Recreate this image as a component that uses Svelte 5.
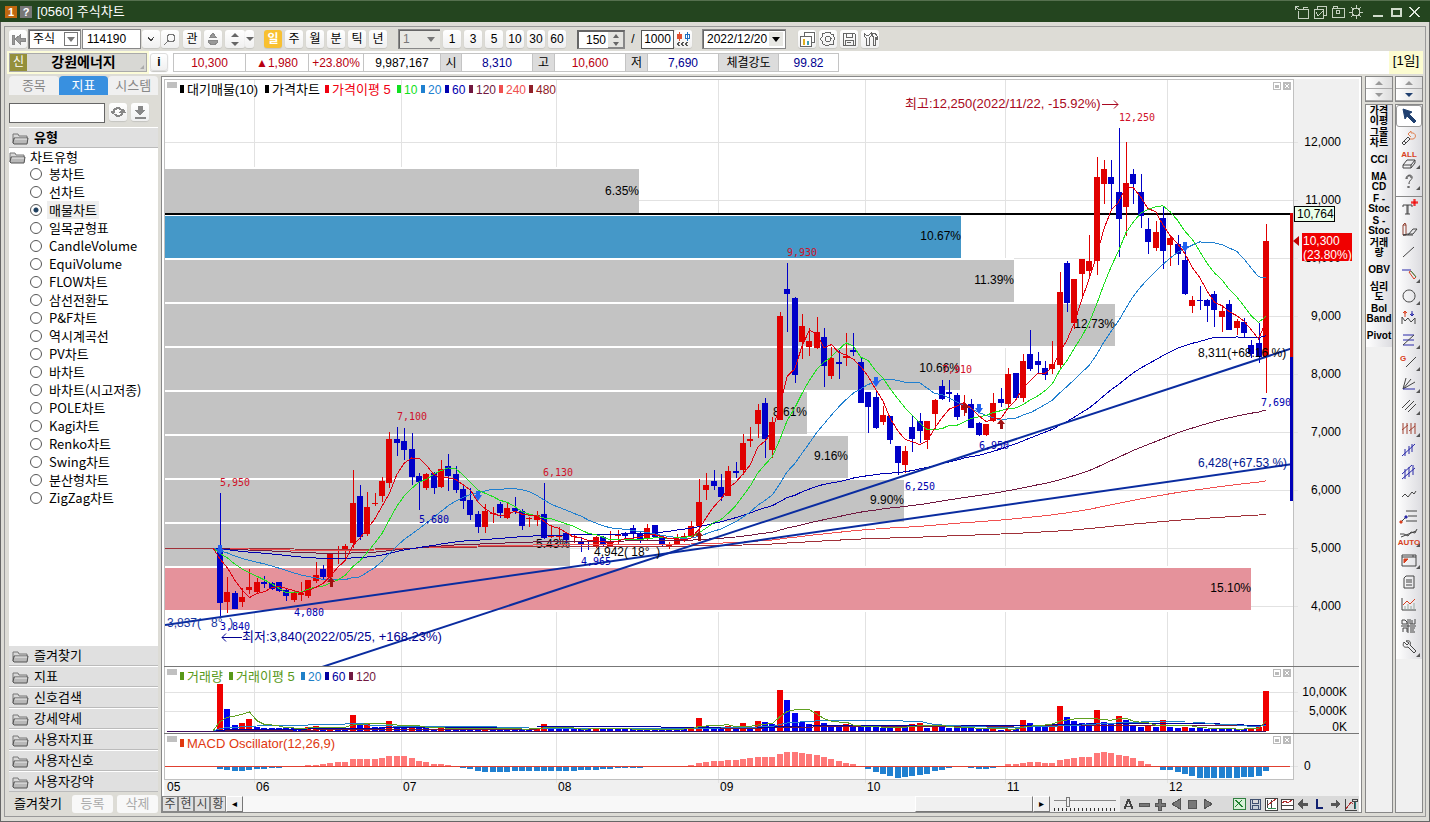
<script>
  let market = "주식";
  let code = "114190";
  let minute = "1";
  let visibleCount = "150";
  let totalCount = "1000";
  let date = "2022/12/20";
  let period = "일";
  let sideTab = "지표";
  let search = "";
  let chartType = "매물차트";
  let zoom = 20;

  const periods = ["일", "주", "월", "분", "틱", "년"];
  const minutes = ["1", "3", "5", "10", "30", "60"];
  const sideTabs = ["종목", "지표", "시스템"];
  const chartTypes = [
    "봉차트", "선차트", "매물차트", "일목균형표", "CandleVolume", "EquiVolume", "FLOW차트",
    "삼선전환도", "P&F차트", "역시계곡선", "PV차트", "바차트", "바차트(시고저종)", "POLE차트",
    "Kagi차트", "Renko차트", "Swing차트", "분산형차트", "ZigZag차트",
  ];
  const groups = ["즐겨찾기", "지표", "신호검색", "강세약세", "사용자지표", "사용자신호", "사용자강약"];
  const shortcuts = [
    ["가격", "이평"], ["그물", "차트"], ["CCI"], ["MA", "CD"], ["F -", "Stoc"], ["S -", "Stoc"],
    ["거래", "량"], ["OBV"], ["심리", "도"], ["Bol", "Band"], ["Pivot"],
  ];
  const quotes = [
    { text: "10,300", kind: "up", w: 72 },
    { text: "▲1,980", kind: "up", w: 63 },
    { text: "+23.80%", kind: "up", w: 55 },
    { text: "9,987,167", kind: "", w: 77 },
    { text: "시", kind: "head", w: 21 },
    { text: "8,310", kind: "down", w: 71 },
    { text: "고", kind: "head", w: 22 },
    { text: "10,600", kind: "up", w: 71 },
    { text: "저", kind: "head", w: 22 },
    { text: "7,690", kind: "down", w: 71 },
    { text: "체결강도", kind: "head", w: 60 },
    { text: "99.82", kind: "down", w: 60 },
  ];

  // r/b = up/down day, then high, body top, body bottom, low
  const raw = `b493,548,603,616 r577,592,602,613 b591,593,609,609 r588,597,602,607 r569,587,590,594 r578,582,592,593
b576,582,584,588 b582,583,589,590 b582,582,591,592 b589,590,596,601 r592,593,600,602 r582,593,595,601
r580,580,596,598 r562,575,581,583 b565,569,577,580 r553,554,577,582 r546,550,551,564 r544,546,551,561
r470,503,543,548 b485,496,537,540 r492,507,534,536 r493,503,504,506 r477,481,496,502 r432,439,483,488
b427,439,443,456 b428,441,450,460 b433,449,477,485 b473,476,482,510 r473,474,488,490 b472,473,488,494
r460,469,487,488 b454,466,476,491 b466,474,490,493 b486,489,501,509 b488,500,515,520 b511,514,527,533
r504,511,527,533 r507,513,514,523 b502,504,513,518 r503,508,518,519 b497,508,511,514 b509,511,526,530
r517,518,519,527 r511,515,520,526 b483,514,538,539 r525,535,537,538 r527,535,537,540 b532,533,540,543
r535,536,537,543 b537,542,544,552 b541,546,547,550 r536,537,547,548 b536,537,545,546 r531,541,546,547
r530,535,536,545 b532,534,536,538 b525,528,534,538 b532,533,539,543 r524,528,539,540 b525,525,537,538
b536,538,545,547 r542,544,547,549 r534,539,544,545 r533,536,540,542 r521,526,537,538 r479,502,526,540
r473,485,490,500 b470,481,486,490 b474,487,497,501 r466,471,496,496 b462,471,473,478 r434,443,470,475
r427,439,441,447 r404,410,424,438 b398,403,439,458 r417,422,450,458 r312,316,420,420 b263,289,294,332
b297,298,375,383 r314,326,342,359 r328,341,347,356 r317,332,348,349 b328,337,366,387 r347,358,376,379
b350,362,364,379 r333,356,358,366 b333,350,352,356 b358,362,403,403 b392,392,407,433 b390,397,428,429
r406,415,422,425 b416,416,440,444 b446,446,463,475 r446,451,465,473 b416,427,439,452 b413,421,431,443
r421,421,440,449 r399,400,414,429 b380,386,399,400 b380,392,394,402 b393,395,417,420 r395,404,410,416
b399,404,428,428 b422,423,435,436 r424,424,435,436 r393,403,421,422 b388,399,403,407 r368,374,404,407
b373,373,398,398 r354,361,398,402 b330,354,369,371 b352,361,365,373 b361,368,375,380 r341,364,369,374
r272,292,365,370 b261,263,303,312 r279,279,323,329 r259,259,274,297 r235,261,271,276 r157,177,261,275
r160,169,184,204 b160,177,184,210 b128,192,219,257 r142,183,207,236 b169,174,184,204 b174,192,216,228
b218,229,242,254 r221,232,248,251 b206,218,251,269 r237,238,245,266 b235,244,254,265 b247,260,294,295
r296,300,306,313 b286,300,301,310 b299,300,306,322 b291,294,310,327 r305,311,317,332 b300,304,330,330
r319,321,328,335 b318,322,333,337 b340,345,354,358 b323,343,357,363 r224,241,357,393`;

  const volumes = [
    47, 22, 6, 8, 12, 4, 3, 3, 3, 3, 3, 2, 4, 5, 3, 4, 4, 3, 16, 6, 8, 4, 4, 10, 4, 4, 5, 3, 3, 2,
    3, 3, 2, 2, 2, 2, 3, 2, 2, 2, 2, 2, 2, 3, 7, 2, 2, 2, 2, 2, 2, 3, 2, 2, 2, 2, 2, 2, 2, 2,
    2, 2, 2, 2, 3, 13, 5, 4, 4, 5, 3, 8, 4, 10, 9, 7, 41, 31, 18, 9, 7, 20, 8, 6, 4, 7, 4, 4, 4, 4,
    3, 3, 5, 4, 7, 8, 3, 5, 4, 3, 3, 3, 3, 2, 2, 3, 1, 2, 2, 11, 8, 5, 4, 7, 25, 14, 10, 8, 8, 21,
    9, 8, 15, 11, 6, 4, 5, 4, 11, 4, 3, 4, 3, 3, 2, 2, 2, 2, 2, 2, 3, 4, 40,
  ];

  const oscillator = [
    -3, -4, -5, -5, -4, -3, -3, -2, -2, -1, -1, -1, 1, 1, 2, 3, 4, 4, 7, 7, 7, 7, 8, 10, 10, 10, 8, 5, 4, 2,
    2, 1, 0, -2, -3, -5, -6, -6, -6, -6, -5, -5, -5, -5, -5, -5, -5, -5, -5, -4, -4, -4, -3, -3, -2, -2, -2, -2, -1, -1,
    -1, -1, -1, -1, 1, 3, 4, 5, 5, 6, 6, 7, 8, 9, 9, 9, 12, 14, 14, 13, 12, 11, 9, 7, 5, 3, 2, -1, -3, -6,
    -8, -10, -12, -11, -10, -9, -8, -5, -4, -2, -1, -1, -2, -3, -3, -2, -1, 2, 2, 3, 4, 4, 3, 3, 6, 7, 8, 9, 9, 13,
    14, 13, 11, 10, 8, 5, 2, -1, -4, -4, -6, -8, -10, -12, -12, -12, -12, -12, -12, -11, -11, -10, -5,
  ];

  const step = 1046 / 142;
  const xOf = (i) => 220 + i * step;

  const candles = raw.split(/\s+/).map((item, i) => {
    const [high, top, bottom, low] = item.slice(1).split(",").map(Number);
    const up = item[0] === "r";
    return { x: Math.round(xOf(i)), up, high, top, bottom, low, close: up ? top : bottom };
  });

  // moving average, days before the listing count as the base value
  function average(values, n, base) {
    let points = `${213},${base}`;
    for (let i = 0; i < values.length; i++) {
      let sum = 0;
      for (let k = i - n + 1; k <= i; k++) sum += k < 0 ? base : values[k];
      points += ` ${xOf(i).toFixed(1)},${(sum / n).toFixed(1)}`;
    }
    return points;
  }

  const closes = candles.map((c) => c.close);
  const priceLines = [
    [480, "#a03038"], [240, "#f05050"], [120, "#701840"], [60, "#0000b0"], [20, "#2080d0"], [10, "#20e020"], [5, "#e00010"],
  ].map(([n, color]) => ({ color, points: average(closes, n, 548) }));
  const volumeTops = volumes.map((v) => 731 - v);
  const volumeLines = [
    [120, "#701840", 731], [60, "#0000a0", 731], [20, "#2080c8", 731], [5, "#60a020", 731],
  ].map(([n, color, base]) => ({ color, points: average(volumeTops, n, base) }));

  const profile = [
    ["6.35%", 639, "#c3c3c3"], ["10.67%", 961, "#4598c8"], ["11.39%", 1014, "#c3c3c3"], ["12.73%", 1115, "#c3c3c3"],
    ["10.66%", 960, "#c3c3c3"], ["8.61%", 807, "#c3c3c3"], ["9.16%", 848, "#c3c3c3"], ["9.90%", 904, "#c3c3c3"],
    ["5.43%", 570, "#c3c3c3"], ["15.10%", 1251, "#e5929b"],
  ].map(([text, end, color], i) => ({ text, end, color, y: i ? 172 + i * 44 : 169, h: i ? 42 : 44 }));

  const months = [["05", 165], ["06", 254], ["07", 401], ["08", 556], ["09", 718], ["10", 865], ["11", 1005], ["12", 1167]];
  const prices = [12, 11, 10, 9, 8, 7, 6, 5, 4].map((p) => ({ text: p + ",000", y: 142 + (12 - p) * 58 }));

  const priceLegend = [
    ["대기매물(10)", 180, "#000"], ["가격차트", 265, "#000"], ["가격이평 5", 325, "#f00010"], ["10", 397, "#10e020"],
    ["20", 421, "#2080d0"], ["60", 445, "#0000b0"], ["120", 469, "#701840"], ["240", 499, "#f05050"], ["480", 529, "#902028"],
  ];
  const volumeLegend = [
    ["거래량", 180, "#589818"], ["거래이평 5", 229, "#589818"], ["20", 301, "#2080c8"], ["60", 325, "#0000a0"], ["120", 349, "#701840"],
  ];
  const peaks = [["5,950", 220, 486], ["7,100", 397, 420], ["6,130", 543, 476], ["9,930", 787, 256], ["7,910", 942, 373], ["12,250", 1119, 121]];
  const lows = [["3,840", 220, 630], ["4,080", 294, 616], ["5,680", 419, 523], ["4,965", 581, 565], ["6,250", 905, 490], ["6,950", 979, 449], ["7,690", 1261, 406]];
  const sells = [[220, 550], [478, 496], [876, 382], [979, 409], [1185, 247]];
  const buys = [[331, 582], [699, 536], [965, 408], [1001, 424]];

  // every icon is a list of [stroke, path, fill]
  const g = "#444";
  const r = "#d84020";
  const n = "#2828a8";
  const tools = [
    { name: "선택", shapes: [["#204070", "M4 3l9 3-3 2 7 7-2 2-7-7-2 3z", "#204070"]] },
    { name: "지우기", shapes: [["#e08050", "M9 6l3-3v2c5-1 6 5 2 6l-3 0M9 6l3 3"], [g, "M3 15l6-6 2 2-6 6zM5 13l2 2"]] },
    { name: "전체 지우기", label: "ALL", more: true, shapes: [[g, "M4 15l4-5h8l-4 5zM4 15v3h8l4-5v-3M12 15v3"]] },
    { name: "도움말", more: true, shapes: [["#444", "M7 7c0-5 7-5 6-1 0 2-3 2-3 6M8 7c0-4 4-4 4-1M10 14v2M9 14v2"]] },
    { name: "텍스트", shapes: [["#444", "M4 9V7h9v2M8 7v9M6 16h5M9 7v9"], ["#f00000", "M15 1v7M12 4h7M16 1v7M12 5h7"]] },
    { name: "도형 지우기", shapes: [["#904030", "M4 5h3v10H4zM4 5l2-2 1 2"], [g, "M4 15h5l5-6h4l-4 5H9zM9 15h5"]] },
    { name: "추세선", shapes: [[g, "M4 15L15 5"]] },
    { name: "수평선", more: true, shapes: [[n, "M3 6h9"], [r, "M10 8l2-1 5 6-2 2z"], ["#309050", "M12 7l5 6"]] },
    { name: "원", more: true, shapes: [[g, "M10 4a6 6 0 1 0 .1 0z"]] },
    { name: "파동", shapes: [[r, "M6 9V3M4 5l2-2 2 2M5 5h2"], [n, "M13 3v5M11 6l2 2 2-2M12 6h2"], [g, "M3 16V9l3 4 3-3 3 4 4-4v6"]] },
    { name: "되돌림", more: true, shapes: [[n, "M4 5h11M4 10h11M4 15h11"], [g, "M15 5L4 15"]] },
    { name: "각도선", label: "G", more: true, shapes: [[g, "M7 15L17 5"]] },
    { name: "팬", more: true, shapes: [[g, "M4 15L7 4M4 15L12 5M4 15L16 8"], [n, "M4 15h12"]] },
    { name: "평행선", more: true, shapes: [[g, "M3 12l8-8M6 14l9-9M9 16l8-8"]] },
    { name: "시간대", more: true, shapes: [["#a04030", "M4 5v11M8 5v11M12 5v11M16 5v11M3 12l6-5M10 13l6-5"]] },
    { name: "회귀선", shapes: [[n, "M3 16L16 4M6 9v7M10 6v8M13 4v8"]] },
    { name: "회귀채널", shapes: [[n, "M3 12L13 3M3 17L16 6M6 7v10M10 5v10M14 3v10"]] },
    { name: "지그재그", shapes: [[g, "M3 13l3-3 3 3 4-5 2 2 2-3"]] },
    { name: "채널", shapes: [[g, "M7 5h11M9 10h9M7 15h11M2 16l5-5"], [r, "M1 15h2v2h-2z", r], [n, "M6 10h2v2h-2z", n]] },
    { name: "자동", label: "AUTO", more: true, shapes: [[g, "M1 6l4 0 4 2 3-4 4 1 2-4M2 9l15-6"]] },
    { name: "창", more: true, shapes: [[g, "M3 5h14v11H3zM3 7h14M14 5v2"], [r, "M5 9h4l-4 4z", r]] },
    { name: "문서", shapes: [[g, "M7 4h8v12H5V6zM7 8h6M7 10h6M7 13h6"]] },
    { name: "통계", shapes: [[g, "M3 4v12h14"], ["#98a8a0", "M6 12v4M9 10v6M12 12v4M15 9v7"], [r, "M4 11l4-4 3 3 5-5"]] },
    { name: "분할", shapes: [[g, "M3 4h3l2 2v2H3zM11 3v5h5V3M13 4v4M2 10h15M4 12h4M4 12v4M8 12v4M11 12h5M11 14h4M11 16h5M9 3v14"]] },
    { name: "설정", more: true, shapes: [[g, "M5 4l3 3 2-2-3-2c4-1 5 1 4 4l6 6-2 2-6-6c-4 1-6-1-4-5z"]] },
  ];
  const footTools = [
    { name: "글자", shapes: [["#444", "M4 13L8 3l4 10M5 10h6M5 13L9 3l4 10"]] },
    { name: "축소", shapes: [["#555", "M3 7h10v3H3z", "#777"]] },
    { name: "확대", shapes: [["#555", "M6 3h3v4h4v3H9v4H6v-4H3V7h3z", "#777"]] },
    { name: "이전", shapes: [["#555", "M12 3v10L4 8z", "#777"]] },
    { name: "정지", shapes: [["#555", "M4 4h8v8H4z", "#777"]] },
    { name: "재생", shapes: [["#555", "M4 3v10l8-5z", "#777"]] },
    { gap: true },
    { name: "엑셀", shapes: [["#308040", "M2 2h12v11H2z", "#d8f0d8"], ["#208030", "M4 4l7 7M11 4l-7 7M5 4l7 7"]] },
    { name: "저장", shapes: [["#405070", "M3 3h10v10H3zM5 3v4h6V3", "#c8d0d8"], ["#405070", "M5 13V9h6v4"]] },
    { name: "차트", shapes: [["#444", "M2 2h12v12H2zM4 4v8M8 4v8", "#fff"], ["#b03030", "M5 9l4-3 4-3"], ["#309050", "M5 12h8"]] },
    { name: "차트 분할", shapes: [["#444", "M2 3h12v10H2zM2 9h12", "#fff"], ["#b03030", "M3 7l3-2 3 2 4-3"]] },
    { name: "왼쪽", shapes: [["#555", "M3 8l4-4v3h5v2H7v3z", "#555"]] },
    { name: "로그", shapes: [["#102070", "M5 3v9h7M6 3v8h6"]] },
    { name: "오른쪽", shapes: [["#555", "M13 8L9 4v3H4v2h5v3z", "#555"]] },
    { name: "도구", shapes: [["#444", "M2 3v11h12M9 3h5v2h-5zM11 5v8"], ["#b03030", "M3 13l5-7 2 2"], ["#208080", "M12 6v7"]] },
  ];
  const titleTools = [
    ["#c4d0c0", "M1 2h4M1 2v4M1 2l4 4M5 5h9v9H4V7M9 5V3h5"],
    ["#c4d0c0", "M2 5h9v9H2zM5 5V2h9v9h-3M4 8l2 4 6-6"],
    ["#c4d0c0", "M2 4h12v9H2zM3 4V2h4v2M8 6a2 2 0 1 0 .1 0z"],
    ["#c4d0c0", "M8 4a4 4 0 1 0 .1 0zM8 1v3M8 12v3M1 8h3M12 8h3M3 3l2 2M11 11l2 2M13 3l-2 2M3 13l2-2"],
  ];
</script>

{#snippet icon(shapes, size)}
  <svg class="icon" class:sharp={size === 16} width={size} height={size} viewBox="0 0 {size} {size}" aria-hidden="true">
    {#each shapes as [stroke, d, fill]}
      <path {d} {stroke} fill={fill || "none"} />
    {/each}
  </svg>
{/snippet}

{#snippet legend(items, y)}
  {#each items as [text, x, color]}
    <rect {x} y={y - 9} width="4" height="8" fill={color} />
    <text class:large={text.length > 3 || text === "거래량"} x={x + 7} {y} fill={color}>{text}</text>
  {/each}
{/snippet}

{#snippet paneButtons(y)}
  <g fill="none" stroke="#bbb">
    <rect x="1273.5" y={y + 0.5} width="7" height="7" />
    <rect x="1275" y={y + 3} width="4" height="3" fill="#bbb" stroke="none" />
    <rect x="1283.5" y={y + 0.5} width="7" height="7" fill="#bbb" />
    <path d="M1285 {y + 2}l4 4m0 -4l-4 4" stroke="#fff" />
  </g>
  <rect x="167" {y} width="10" height="6" fill="#c0c0c0" />
{/snippet}

<div class="window">
  <header class="title">
    <span class="num">1</span>
    <span class="num help">?</span>
    <h1>[0560] 주식차트</h1>
    {#each titleTools as [stroke, d], i}
      <button aria-label="창 도구 {i + 1}">{@render icon([[stroke, d]], 16)}</button>
    {/each}
    <button class="win first" aria-label="최소화">{@render icon([["#d0dccc", "M3 12h10M3 11h10"]], 16)}</button>
    <button class="win" aria-label="최대화">{@render icon([["#d0dccc", "M3 4h10v8H3zM3 5h10M4 4v8M12 4v8M3 11h10"]], 16)}</button>
    <button class="win" aria-label="닫기">{@render icon([["#e0e8dc", "M3 3l10 10M13 3L3 13M4 3l10 10M14 3L4 13"]], 16)}</button>
  </header>

  <div class="frame">
    <div class="toolbar">
      <button class="tool" aria-label="처음">{@render icon([["#888", "M2 4h2v9H2zM5 8l5-4v3h5v3h-5v3z", "#999"]], 16)}</button>
      <div class="pick market">
        <select bind:value={market} aria-label="시장"><option>주식</option></select>
        <span class="caret boxed"></span>
      </div>
      <div class="code">
        <input bind:value={code} aria-label="종목코드" />
        <button class="tool" aria-label="최근 종목">{@render icon([["#444", "M5 6l3 4 3-4"]], 16)}</button>
        <button class="tool" aria-label="종목 검색">{@render icon([["#777", "M9 3a4 4 0 1 0 .1 0zM6 10l-4 4"]], 16)}</button>
      </div>
      <div class="set">
        <button class="tool">관</button>
        <button class="tool" aria-label="연동">{@render icon([["#888", "M5 6l3-4 3 4zM3 9h10c0 6-10 6-10 0z", "#999"]], 16)}</button>
        <button class="tool updown" aria-label="이전 다음"><i class="up"></i><i class="down"></i></button>
        <button class="tool narrow" aria-label="더보기"><i class="down"></i></button>
      </div>
      <div class="set periods">
        {#each periods as p}
          <button class="tool" class:on={period === p} on:click={() => (period = p)}>{p}</button>
        {/each}
      </div>
      <div class="pick minute">
        <select bind:value={minute} aria-label="분"><option>1</option></select>
        <span class="caret"></span>
      </div>
      <div class="set minutes">
        {#each minutes as m}
          <button class="tool">{m}</button>
        {/each}
      </div>
      <div class="count">
        <input bind:value={visibleCount} aria-label="표시 봉수" />
        <button aria-label="봉수 조절"><i class="up"></i><i class="down"></i></button>
      </div>
      <span class="slash">/</span>
      <input class="total" bind:value={totalCount} aria-label="전체 봉수" />
      <button class="tool" aria-label="연속 조회">{@render icon([["#e05030", "M4 1v9M2 3h4v4H2z", "#e05030"], ["#2070c0", "M12 1v9M10 3h4v4h-4z", "#fff"], ["#555", "M5 11l-3 2 3 2M9 11l-3 2 3 2M13 11l-3 2 3 2"]], 16)}</button>
      <div class="pick date">
        <select bind:value={date} aria-label="날짜"><option>2022/12/20</option></select>
        <span class="caret raised"></span>
      </div>
      <div class="set settings">
        <button class="tool" aria-label="차트 종류">{@render icon([["#666", "M5 5V1h10v10h-3M1 5h11v10H1z", "#fff"], ["#e0b020", "M4 8v6M5 8v6"], ["#40a0b0", "M8 10v4M9 10v4"]], 16)}</button>
        <button class="tool" aria-label="환경 설정">{@render icon([["#666", "M8 5a3 3 0 1 0 .1 0zM6 1h4l1 2 2 0 1 3 1 2-2 2 0 3-3 0-2 2-3-1-2-1-1-3-2-2 2-2 0-3 3-1z"]], 16)}</button>
        <button class="tool" aria-label="저장">{@render icon([["#666", "M2 2h11l1 1v11H2zM5 2v4h6V2M4 14V9h8v5M6 11h4"]], 16)}</button>
        <button class="tool" aria-label="도구">{@render icon([["#666", "M2 2v3l2 2v7h3V7l2-2V2L7 4H4zM10 2h3l2 3v3h-1V6h-1v8h-2V5h-1z"]], 16)}</button>
      </div>
    </div>

    <div class="info">
      <div class="stock"><span class="badge">신</span><strong>강원에너지</strong></div>
      <button class="tool about">i</button>
      <div class="quotes">
        {#each quotes as q}
          <span class={q.kind} style="width: {q.w}px">{q.text}</span>
        {/each}
      </div>
      <span class="unit">[1일]</span>
    </div>

    <div class="main">
      <aside>
        <nav class="tabs">
          {#each sideTabs as tab}
            <button class:on={sideTab === tab} on:click={() => (sideTab = tab)}>{tab}</button>
          {/each}
        </nav>
        <div class="search">
          <input bind:value={search} aria-label="지표 검색" />
          <button class="tool" aria-label="새로고침">{@render icon([["#888", "M3 8c0-5 7-6 9-2M13 8c0 5-7 6-9 2M1 7l2 3 3-3zM10 8l3-3 2 3z", "#888"], ["#fff", "M5 8c1-3 4-3 5-1M11 9c-1 2-4 2-5 0", "#fff"]], 16)}</button>
          <button class="tool" aria-label="내려받기">{@render icon([["#888", "M6 2h4v4h3l-5 5-5-5h3zM3 13h10v1H3z", "#888"]], 16)}</button>
        </div>
        <h2 class="group">{@render folder()}<b>유형</b></h2>
        <div class="tree">
          <div class="root">{@render folder()}차트유형</div>
          {#each chartTypes as type}
            <label>
              <input type="radio" name="chart-type" value={type} bind:group={chartType} />
              <span class:chosen={chartType === type}>{type}</span>
            </label>
          {/each}
        </div>
        {#each groups as group}
          <button class="group">{@render folder()}{group}</button>
        {/each}
        <div class="favorites">
          <span>즐겨찾기</span>
          <button disabled>등록</button>
          <button disabled>삭제</button>
        </div>
      </aside>

      <section class="panel">
        <svg class="chart" viewBox="164 79 1195 717" role="img" aria-label="강원에너지 일봉">
          <defs>
            <clipPath id="plot"><rect x="165" y="80" width="1128" height="586" /></clipPath>
          </defs>
          <rect x="164" y="79" width="1195" height="717" fill="#f0f0f0" />
          <rect x="164" y="79" width="1129" height="700" fill="#fff" />

          <g class="crisp" stroke="#e2e2e2">
            {#each prices as p}
              <path d="M165 {p.y + 0.5}H1298" />
            {/each}
            <path d="M165 692.5H1298M165 711.5H1298M165 766.5H1298" />
            {#each months.slice(1) as [, x]}
              <path d="M{x + 0.5} 80V783" />
            {/each}
          </g>

          {#each profile as bar}
            <rect x="165" y={bar.y - 2} width={bar.end - 165} height={bar.h + 4} fill="#fff" />
            <rect x="165" y={bar.y} width={bar.end - 165} height={bar.h} fill={bar.color} />
          {/each}
          {#each profile as bar}
            <text x={bar.end} y={bar.y + bar.h - 18} text-anchor="end">{bar.text}</text>
          {/each}

          <path class="crisp" d="M165 214H1293" stroke="#000" stroke-width="2" />
          {#each candles as c}
            <g class="crisp" fill={c.up ? "#e00000" : "#0000c8"}>
              <rect x={c.x} y={c.high} width="1" height={c.low - c.high} />
              <rect x={c.x - 3} y={c.top} width="6" height={c.bottom - c.top} />
            </g>
          {/each}
          <path d="M165 548.5H213" stroke="#a03038" />
          {#each priceLines as line}
            <polyline class="crisp" points={line.points} fill="none" stroke={line.color} />
          {/each}

          <g clip-path="url(#plot)" stroke="#0a2ca0" stroke-width="2">
            <path d="M165 625L1293 464" />
            <path d="M322 667L1293 348" />
          </g>
          {#each sells as [x, y]}
            <path d="M{x - 2} {y - 5}h4v4h2l-4 6l-4 -6h2z" fill="#2060f0" />
          {/each}
          {#each buys as [x, y]}
            <path d="M{x - 1} {y + 5}h3v-5h2l-4 -5l-4 5h3z" fill="#a01010" />
          {/each}

          <g class="mark" fill="#d01028">
            {#each peaks as [text, x, y]}
              <text {x} {y}>{text}</text>
            {/each}
          </g>
          <g class="mark" fill="#0000b0">
            {#each lows as [text, x, y]}
              <text {x} {y}>{text}</text>
            {/each}
          </g>
          <text class="large" x="905" y="108" fill="#a80820">최고:12,250(2022/11/22, -15.92%)</text>
          <path d="M1102 104.5h16m-4 -4l4 4l-4 4" fill="none" stroke="#a80820" />
          <text class="large" x="242" y="641" fill="#000090">최저:3,840(2022/05/25, +168.23%)</text>
          <path d="M242 637.5h-20m4 -4l-4 4l4 4" fill="none" stroke="#000090" />
          <text x="594" y="556">4,942( 18°&nbsp; )</text>
          <text x="167" y="627" fill="#1838a0">3,837(&nbsp; &nbsp;8°&nbsp; )</text>
          <text x="1198" y="357">8,311(+68.16 %)</text>
          <text x="1198" y="467" fill="#001890">6,428(+67.53 %)</text>

          <rect x="1290" y="213" width="3" height="144" fill="#d80000" />
          <rect x="1290" y="357" width="3" height="144" fill="#0000b8" />
          {@render legend(priceLegend, 94)}
          {@render paneButtons(82)}

          {#each volumes as v, i}
            <rect class="crisp" x={candles[i].x - 3} y={731 - v} width="6" height={v} fill={i === 0 || v > volumes[i - 1] ? "#f00000" : "#0000f0"} />
          {/each}
          {#each volumeLines as line}
            <polyline class="crisp" points={line.points} fill="none" stroke={line.color} />
          {/each}
          <path d="M167 731.5H1266" stroke="#401060" />
          {@render legend(volumeLegend, 681)}
          {@render paneButtons(669)}

          {#each oscillator as v, i}
            <rect class="crisp" x={candles[i].x - 3} y={v > 0 ? 766 - v : 766} width="6" height={Math.abs(v)} fill={v > 0 ? "#ff7878" : "#2080d0"} />
          {/each}
          <path d="M165 766.5H1290" stroke="#e04030" />
          {@render legend([["MACD Oscillator(12,26,9)", 180, "#e03810"]], 748)}
          {@render paneButtons(736)}

          <g class="crisp" fill="none" stroke="#c0c0c0">
            <path d="M164 79.5H1293.5V779.5H164.5V79" />
          </g>
          <path class="crisp" d="M164 666.5H1359M164 733.5H1359" stroke="#777" />

          {#each prices as p}
            <text x="1341" y={p.y + 4} text-anchor="end">{p.text}</text>
          {/each}
          <g text-anchor="end">
            <text x="1347" y="696">10,000K</text>
            <text x="1347" y="715">5,000K</text>
            <text x="1347" y="731">0K</text>
          </g>
          <text x="1304" y="770">0</text>
          {#each months as [text, x]}
            <text x={x + 2} y="791">{text}</text>
          {/each}

          <rect x="1294.5" y="206.5" width="40" height="15" fill="#eaffea" stroke="#000" />
          <text x="1297" y="218">10,764</text>
          <rect x="1302" y="233" width="50" height="28" fill="#f00000" />
          <text x="1303" y="245" fill="#fff">10,300</text>
          <text x="1303" y="259" fill="#fff">(23.80%)</text>
          <path d="M1293 241l6 -5v10z" fill="#c00000" />
        </svg>

        <div class="foot">
          {#each ["주", "현", "시", "황"] as key}
            <button class="key">{key}</button>
          {/each}
          <button class="arrow" aria-label="왼쪽으로">◂</button>
          <div class="track"><div class="thumb"></div></div>
          <button class="arrow" aria-label="오른쪽으로">▸</button>
          <input class="zoom" type="range" min="0" max="100" bind:value={zoom} aria-label="확대 비율" />
          <div class="foot-tools">
            {#each footTools as tool}
              {#if tool.gap}
                <span class="gap"></span>
              {:else}
                <button aria-label={tool.name}>{@render icon(tool.shapes, 16)}</button>
              {/if}
            {/each}
          </div>
        </div>
      </section>

      <div class="strip">
        <div class="scroll"><button aria-label="위"><i class="up"></i></button><button aria-label="아래"><i class="down"></i></button></div>
        <div class="well">
          <div class="items words">
            {#each shortcuts as lines}
              <button>{#each lines as line}<span>{line}</span>{/each}</button>
            {/each}
          </div>
        </div>
      </div>
      <div class="strip second">
        <div class="scroll"><button aria-label="위"><i class="up"></i></button><button aria-label="아래"><i class="down dark"></i></button></div>
        <div class="well">
          <div class="items">
            {#each tools as tool, i}
              <button class:picked={i === 0} class:ruled={i === 3} class:more={tool.more} aria-label={tool.name}>
                {@render icon(tool.shapes, 20)}
                {#if tool.label}<em class:corner={tool.label === "G"} class:low={tool.label === "AUTO"}>{tool.label}</em>{/if}
              </button>
            {/each}
          </div>
        </div>
      </div>
    </div>
  </div>
</div>

{#snippet folder()}
  <svg class="folder" width="18" height="14" viewBox="0 0 18 14" aria-hidden="true">
    <path d="M1 12V3h5l1 2h8v7z" fill="#d8d8d8" stroke="#777" />
    <path d="M1 12l1-5h14l-1 6H2z" fill="#b8b8b8" stroke="#555" />
    <path d="M3 8h12" stroke="#eee" />
  </svg>
{/snippet}

<style>
  :global(body) {
    margin: 0;
  }
  .window {
    box-sizing: border-box;
    display: flex;
    flex-direction: column;
    min-height: 100vh;
    background: #dddcd6;
    border-bottom: 1px solid #666;
    box-shadow: inset 1px 0 #666, inset -1px 0 #666;
    font: 12px/16px "Liberation Sans", "Noto Sans CJK KR", sans-serif;
    color: #000;
  }
  .window :global(*) {
    box-sizing: border-box;
  }
  button,
  input,
  select {
    margin: 0;
    padding: 0;
    border: 0;
    border-radius: 0;
    background: none;
    font: inherit;
    color: inherit;
    outline: none;
  }
  svg {
    display: block;
    flex: none;
  }
  .sharp {
    shape-rendering: crispEdges;
  }
  .title {
    display: flex;
    align-items: center;
    height: 22px;
    padding: 0 6px 0 5px;
    background: #24451f;
    border-top: 1px solid #56704f;
    color: #fff;
  }
  .title h1 {
    flex: 1;
    margin: 0 0 0 2px;
    font-size: 13px;
    font-weight: 400;
  }
  .title button {
    width: 18px;
  }
  .title .first {
    margin-left: 4px;
  }
  .num {
    width: 12px;
    height: 12px;
    margin-right: 3px;
    background: #c06810;
    font-size: 11px;
    font-weight: 700;
    line-height: 12px;
    text-align: center;
  }
  .help {
    background: #777;
  }
  .frame {
    display: flex;
    flex: 1;
    flex-direction: column;
    margin: 4px;
    border: 1px solid #999;
  }
  .toolbar {
    display: flex;
    align-items: center;
    height: 24px;
    padding-left: 4px;
  }
  .tool {
    display: flex;
    flex: none;
    align-items: center;
    justify-content: center;
    width: 18px;
    height: 18px;
    border-radius: 3px;
    background: linear-gradient(#fff, #f0f0f0);
    box-shadow: 0 1px 1px #c4c4c0;
  }
  .set {
    display: flex;
    gap: 3px;
  }
  .periods {
    margin-left: 10px;
  }
  .periods .on {
    background: #f8c030;
    color: #fff;
    font-weight: 700;
  }
  .updown {
    flex-direction: column;
    gap: 5px;
    width: 20px;
  }
  .narrow {
    width: 9px;
    margin-left: -3px;
  }
  i.up,
  i.down {
    width: 0;
    height: 0;
    border: 4px solid transparent;
    border-top-width: 0;
    border-bottom-color: #666;
  }
  i.down {
    border-width: 4px 4px 0;
    border-color: #666 transparent transparent;
  }
  i.dark {
    border-top-color: #204070;
  }
  .pick {
    position: relative;
    height: 20px;
    background: #fff;
    border: 1px solid #888;
    box-shadow: inset 1px 1px #666;
  }
  .pick select {
    width: 100%;
    height: 18px;
    padding-left: 4px;
    appearance: none;
  }
  .caret {
    position: absolute;
    top: 2px;
    right: 2px;
    width: 14px;
    height: 14px;
    pointer-events: none;
  }
  .caret::after {
    content: "";
    position: absolute;
    top: 5px;
    left: 3px;
    border: 4px solid transparent;
    border-top: 5px solid #777;
    border-bottom: 0;
  }
  .boxed {
    border: 1px solid #777;
  }
  .boxed::after {
    top: 4px;
    left: 2px;
  }
  .raised {
    background: #e8e8e4;
  }
  .raised::after {
    border-top-color: #000;
  }
  .market {
    width: 53px;
    margin: 0 1px;
  }
  .code {
    display: flex;
    align-items: center;
    gap: 1px;
    margin-right: 4px;
  }
  .code input {
    width: 59px;
    height: 20px;
    padding-left: 4px;
    border: 1px solid #888;
    background: #fff;
  }
  .minute {
    width: 42px;
    margin: 0 3px 0 11px;
    background: #e8e8e4;
    border-right: 0;
    color: #777;
  }
  .count {
    display: flex;
    width: 48px;
    height: 19px;
    margin-left: 11px;
    border: 1px solid #888;
    border-top: 2px solid #666;
    border-left: 2px solid #666;
    background: #fff;
  }
  .count input {
    width: 29px;
    padding-right: 2px;
    text-align: right;
  }
  .count button {
    display: flex;
    flex: 1;
    flex-direction: column;
    align-items: center;
    justify-content: center;
    gap: 4px;
    background: #e4e4e0;
    box-shadow: inset -1px -1px #888;
  }
  .count i {
    border-right-width: 3px;
    border-left-width: 3px;
  }
  .slash {
    width: 16px;
    text-align: center;
  }
  .total {
    width: 33px;
    height: 19px;
    border: 1px solid #555;
    background: #fff;
    text-align: center;
  }
  .date {
    width: 84px;
    margin: 0 12px 0 10px;
  }
  .info {
    display: flex;
    align-items: flex-start;
    height: 24px;
    margin: 0 2px 0 3px;
    padding: 2px 0 0 1px;
    background: #fff;
    border-bottom: 1px solid #dddcd6;
  }
  .stock {
    display: flex;
    width: 138px;
    height: 19px;
    margin-right: 3px;
    border: 1px solid #aaa;
    background: #d8d8d4;
    outline: 2px solid #fcfcd8;
  }
  .stock strong {
    flex: 1;
    font-size: 14px;
    line-height: 17px;
    text-align: center;
  }
  .stock::after {
    content: "";
    align-self: flex-end;
    margin: 0 2px 2px 0;
    border: 2px solid #aaa;
    border-top-color: transparent;
    border-left-color: transparent;
  }
  .badge {
    width: 17px;
    background: #94903c;
    color: #fff;
    line-height: 16px;
    text-align: center;
  }
  .about {
    margin-right: 5px;
    border: 1px solid #ddd;
    font-weight: 700;
  }
  .quotes {
    display: flex;
    height: 19px;
    border: 1px solid #c4c4c4;
    border-left: 0;
    line-height: 18px;
    text-align: center;
  }
  .quotes span {
    border-left: 1px solid #c4c4c4;
    white-space: nowrap;
  }
  .quotes .up {
    color: #b80010;
  }
  .quotes .down {
    color: #000090;
  }
  .quotes .head {
    background: #dcdcdc;
  }
  .unit {
    width: 34px;
    height: 23px;
    margin: -2px 0 0 auto;
    background: #fcfcd0;
    font-size: 13px;
    line-height: 20px;
    text-align: center;
  }
  .main {
    display: flex;
    flex: 1;
    padding: 1px 2px 3px 4px;
  }
  aside {
    display: flex;
    flex: none;
    flex-direction: column;
    width: 149px;
    margin-right: 3px;
  }
  .tabs {
    display: flex;
    height: 27px;
    padding-bottom: 8px;
  }
  .tabs button {
    flex: 1;
    border-radius: 4px 4px 0 0;
    background: #f0f0f0;
    color: #888;
    font-size: 13px;
  }
  .tabs .on {
    background: #3890e0;
    color: #fff;
  }
  .search {
    display: flex;
    gap: 4px;
    height: 24px;
  }
  .search input {
    width: 96px;
    height: 20px;
    border: 1px solid #666;
    background: #fff;
  }
  .group {
    display: flex;
    flex: none;
    align-items: center;
    gap: 4px;
    height: 21px;
    margin: 0;
    padding: 0 0 0 3px;
    border-top: 1px solid #fff;
    border-bottom: 1px solid #bbb;
    background: #e0e0e0;
    font-size: 13px;
    font-weight: 400;
  }
  .tree {
    flex: 1;
    background: #fff;
    font-family: "Noto Sans CJK KR", sans-serif;
    font-size: 13px;
  }
  .root {
    display: flex;
    align-items: center;
    gap: 3px;
    height: 17px;
  }
  .tree label {
    display: flex;
    align-items: center;
    gap: 5px;
    height: 18px;
    padding-left: 21px;
  }
  .tree input {
    width: 12px;
    height: 12px;
    border: 1px solid #555;
    border-radius: 50%;
    appearance: none;
  }
  .tree input:checked {
    background: radial-gradient(#204060 2px, #fff 3px);
  }
  .tree label span {
    padding: 0 2px;
    line-height: 18px;
  }
  .tree .chosen {
    background: #eee;
  }
  .favorites {
    display: flex;
    align-items: center;
    gap: 4px;
    height: 21px;
    padding: 2px 0 0 5px;
    font-size: 13px;
  }
  .favorites span {
    flex: 1;
  }
  .favorites button {
    width: 41px;
    height: 18px;
    border-radius: 3px;
    background: #f8f8f8;
    color: #aaa;
  }
  .panel {
    flex: 1;
    min-width: 0;
    padding: 2px 2px 0;
    border: 1px solid #888;
    background: #fff;
  }
  .chart {
    width: 100%;
    height: auto;
  }
  .crisp {
    shape-rendering: crispEdges;
  }
  .mark {
    font: 10px "DejaVu Sans Mono", monospace;
  }
  .large {
    font-size: 13px;
  }
  .foot {
    display: flex;
    height: 16px;
    margin-left: -2px;
    background: #f0f0f0;
  }
  .key {
    width: 16px;
    border: 1px solid #888;
    background: #e0e0e0;
    color: #444;
    line-height: 14px;
  }
  .arrow {
    width: 17px;
    border: 1px solid #fff;
    border-right-color: #777;
    border-bottom-color: #777;
    background: #f0f0f0;
    font-size: 10px;
    line-height: 12px;
  }
  .track {
    display: flex;
    flex: 1;
    justify-content: flex-end;
    background: #f8f8f8;
  }
  .thumb {
    width: 15%;
    border: 1px solid #fff;
    border-right-color: #777;
    border-bottom-color: #777;
    background: #f0f0f0;
  }
  .zoom {
    width: 62px;
    height: 16px;
    margin: 0 4px;
    appearance: none;
    background:
      linear-gradient(#888, #888) 0 4px / 100% 1px no-repeat,
      repeating-linear-gradient(90deg, #333 0 1px, transparent 1px 4px) 0 12px / 100% 3px no-repeat;
  }
  .zoom::-webkit-slider-thumb {
    width: 4px;
    height: 10px;
    margin-top: -4px;
    border: 1px solid #777;
    background: #f0f0f0;
    appearance: none;
  }
  .foot-tools {
    display: flex;
    width: 239px;
    background: #dadada;
  }
  .foot-tools button {
    width: 16px;
  }
  .foot-tools .gap {
    width: 15px;
  }
  .strip {
    display: flex;
    flex: none;
    flex-direction: column;
    gap: 2px;
    width: 28px;
    margin-left: 3px;
  }
  .second {
    margin-left: 2px;
  }
  .scroll {
    height: 26px;
    border: 1px solid #888;
  }
  .scroll button {
    display: flex;
    align-items: center;
    justify-content: center;
    width: 100%;
    height: 12px;
    background: linear-gradient(90deg, #fff, #ddd);
    border-bottom: 1px solid #aaa;
  }
  .scroll i.up {
    border-bottom-color: #999;
  }
  .strip:not(.second) i.down {
    border-top-color: #999;
  }
  .well {
    flex: 1;
    border: 1px solid #888;
    background: #f0f0f0;
  }
  .items {
    background: linear-gradient(90deg, #fff, #dcdce0);
  }
  .items button {
    position: relative;
    display: flex;
    align-items: center;
    justify-content: center;
    width: 100%;
    height: 22px;
  }
  .items .picked {
    border: 1px solid #999;
    border-radius: 3px;
    background: #fff;
  }
  .items .ruled {
    height: 26px;
    padding-bottom: 4px;
    border-bottom: 1px solid #888;
  }
  .more::after {
    content: "";
    position: absolute;
    right: 2px;
    bottom: 2px;
    border: 2px solid #555;
    border-top-color: transparent;
    border-left-color: transparent;
  }
  .ruled::after {
    bottom: 6px;
  }
  .items em {
    position: absolute;
    top: 2px;
    left: 0;
    width: 100%;
    color: #d84020;
    font-size: 8px;
    font-style: normal;
    font-weight: 700;
    line-height: 8px;
    text-align: center;
  }
  .items .corner {
    width: 14px;
    top: 4px;
  }
  .items .low {
    top: 12px;
  }
  .words button {
    flex-direction: column;
    font-size: 10px;
    font-weight: 700;
    line-height: 10px;
  }
</style>
